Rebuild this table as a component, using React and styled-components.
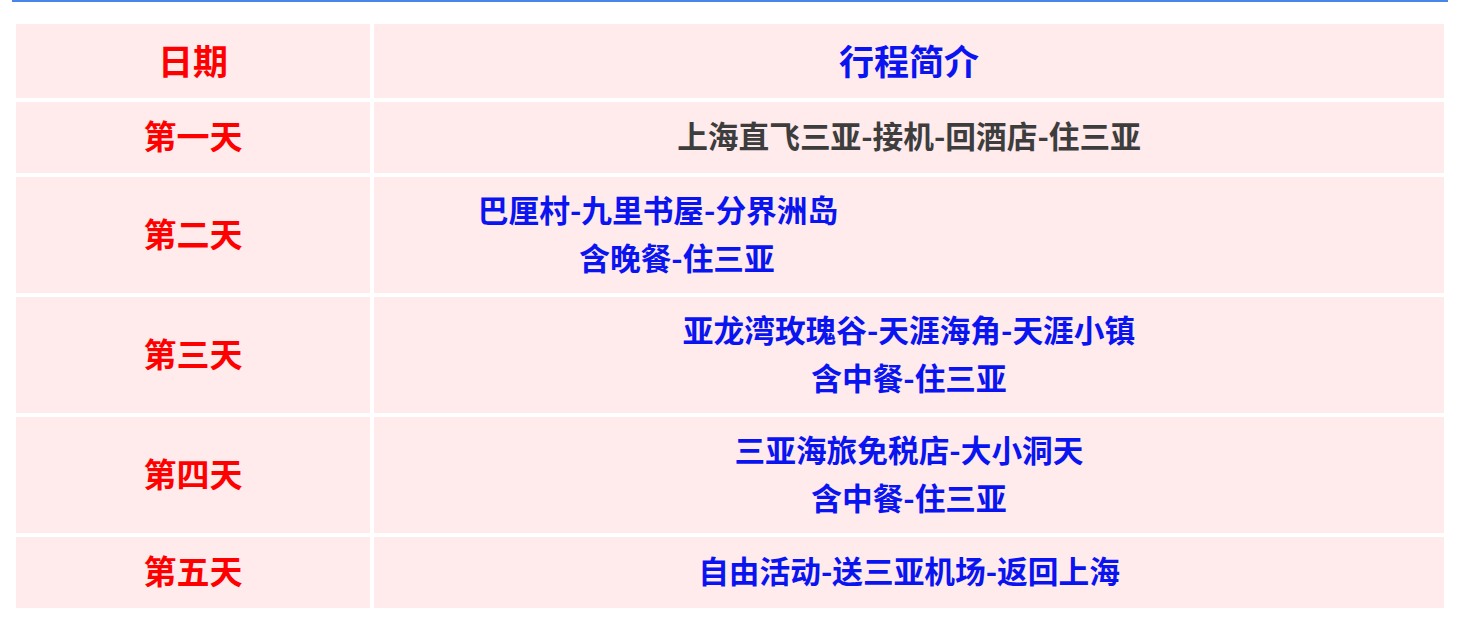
import React from "react";
import styled, { createGlobalStyle } from "styled-components";

const GlobalStyle = createGlobalStyle`
  body {
    margin: 0;
    background: #fff;
    font-family: "Noto Sans CJK SC", "Noto Sans", sans-serif;
  }
`;

const days = [
  { day: "第一天", lines: [{ text: "上海直飞三亚-接机-回酒店-住三亚" }], tone: "gray" },
  {
    day: "第二天",
    lines: [
      { text: "巴厘村-九里书屋-分界洲岛", shift: 502 },
      { text: "含晚餐-住三亚", shift: 464 },
    ],
  },
  { day: "第三天", lines: [{ text: "亚龙湾玫瑰谷-天涯海角-天涯小镇" }, { text: "含中餐-住三亚" }] },
  { day: "第四天", lines: [{ text: "三亚海旅免税店-大小洞天" }, { text: "含中餐-住三亚" }] },
  { day: "第五天", lines: [{ text: "自由活动-送三亚机场-返回上海" }] },
];

// vertical padding [top, bottom] per row kind
const HEAD_PAD = [12, 14];
const SINGLE_PAD = [9, 14];
const DOUBLE_PAD = [7.5, 12.5];

export default function App() {
  return (
    <>
      <GlobalStyle />
      <Wrapper>
        <Table>
          <colgroup>
            <col style={{ width: 354 }} />
            <col />
          </colgroup>
          <tbody>
            <tr>
              <Cell $pad={HEAD_PAD} $size={35} $color="#ff0000">日期</Cell>
              <Cell $pad={HEAD_PAD} $size={35} $color="#0a14f0">行程简介</Cell>
            </tr>
            {days.map((d) => {
              const pad = d.lines.length > 1 ? DOUBLE_PAD : SINGLE_PAD;
              return (
                <tr key={d.day}>
                  <Cell $pad={pad} $size={33} $color="#ff0000">
                    {d.day}
                  </Cell>
                  <Cell
                    $pad={pad}
                    $size={30.7}
                    $color={d.tone === "gray" ? "#3d3d3d" : "#0a14f0"}
                  >
                    {d.lines.map((l) => (
                      <Line key={l.text} $shift={l.shift || 0}>
                        {l.text}
                      </Line>
                    ))}
                  </Cell>
                </tr>
              );
            })}
          </tbody>
        </Table>
      </Wrapper>
    </>
  );
}

const Wrapper = styled.div`
  width: 1436px;
  margin-left: 12px;
  border-top: 2px solid #4a86e8;
  padding-top: 18px;
`;

const Table = styled.table`
  width: 100%;
  border-collapse: separate;
  border-spacing: 4px;
  table-layout: fixed;
`;

const Cell = styled.td`
  background: #ffeaec;
  padding: ${(p) => p.$pad[0]}px 0 ${(p) => p.$pad[1]}px;
  text-align: center;
  vertical-align: middle;
  color: ${(p) => p.$color};
  font-size: ${(p) => p.$size}px;
  font-weight: 700;
  line-height: 48px;
`;

const Line = styled.span`
  display: block;
  padding-right: ${(p) => p.$shift}px;
`;
